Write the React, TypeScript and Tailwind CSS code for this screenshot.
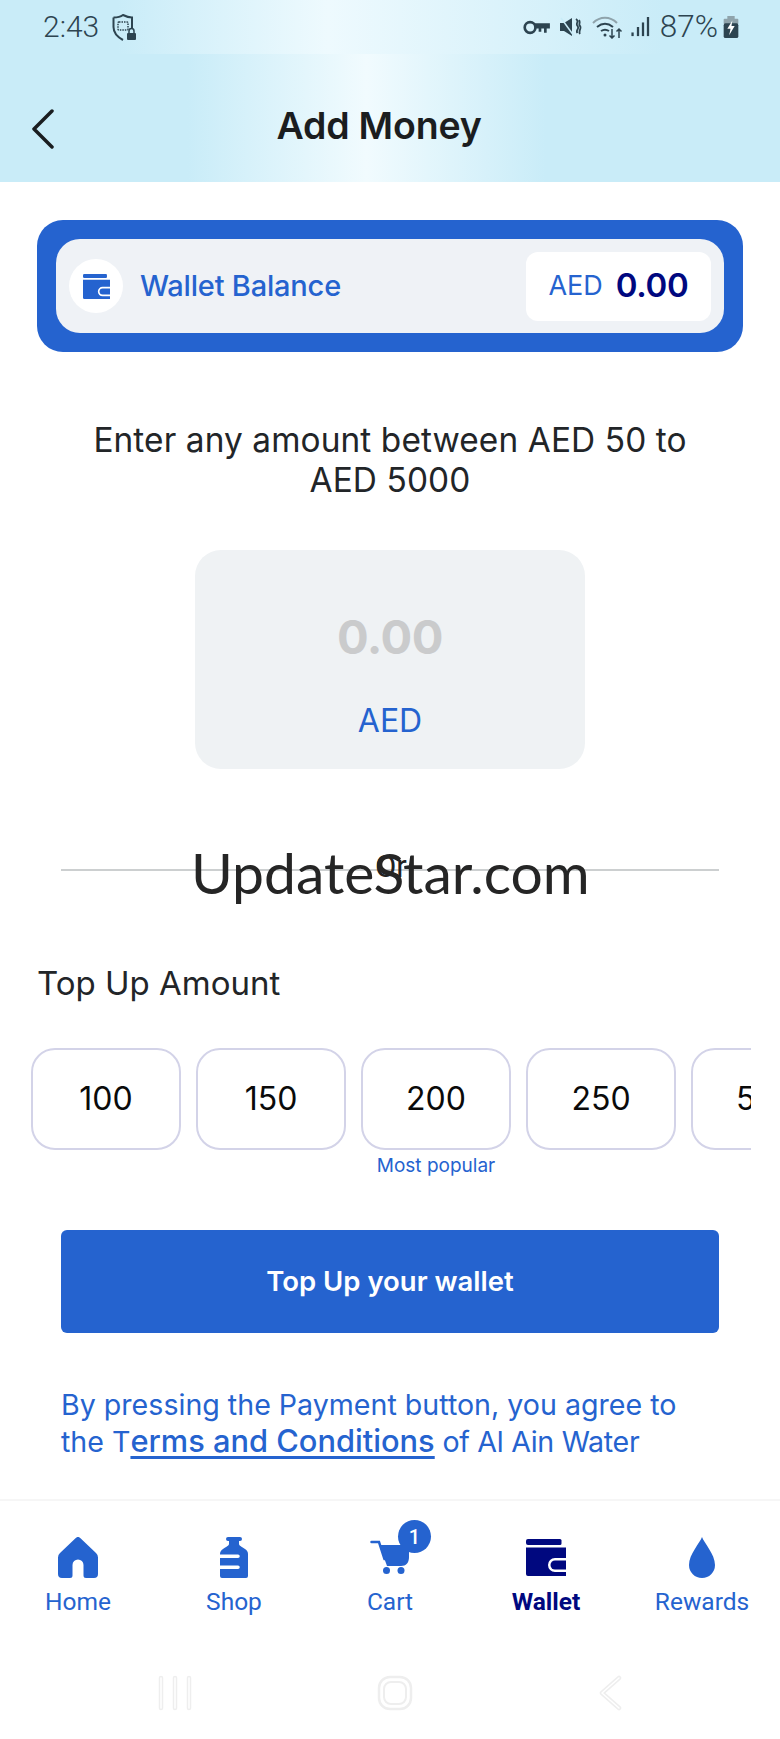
const blue = '#2563cf'
const navy = '#00087f'

function WalletIcon({ color, className }: { color: string; className: string }) {
  return (
    <svg viewBox="0 0 40 37" className={className}>
      <path d="M2 0h32a1.5 1.5 0 0 1 1.500 1.500v3a1.500 1.500 0 0 1-1.500 1.500H2a2 2 0 0 1-2-2V2a2 2 0 0 1 2-2z" fill={color} />
      <path d="M0 8.500h40V19H29a7 7 0 0 0 0 14h11v4H2a2 2 0 0 1-2-2z" fill={color} />
      <path d="M40 21.500H29a4.500 4.500 0 0 0 0 9h11z" fill={color} />
    </svg>
  )
}

function HomeIcon() {
  return (
    <svg viewBox="0 0 40 41" className="h-[41px] w-[40px]">
      <path
        fill={blue}
        d="M17.500 1.200a3.500 3.500 0 0 1 5 0L38 16a6 6 0 0 1 2 4.500V37a4 4 0 0 1-4 4h-8a2.500 2.500 0 0 1-2.500-2.500V28a5.500 5.500 0 0 0-11 0v10.500A2.500 2.500 0 0 1 12 41H4a4 4 0 0 1-4-4V20.500A6 6 0 0 1 2 16z"
      />
    </svg>
  )
}

function BottleIcon() {
  return (
    <svg viewBox="0 0 28 41" className="h-[41px] w-[28px]">
      <path
        fill={blue}
        d="M8 0h12a2 2 0 0 1 0 4h-1v3c0 1.500 3 3 6 5 2 1 3 3 3 5v22a2 2 0 0 1-2 2H2a2 2 0 0 1-2-2v-7h18a1.750 1.750 0 0 0 0-3.500H0V21h18a1.750 1.750 0 0 0 0-3.500H0V17c0-2 1-4 3-5 3-2 6-3.500 6-5V4H8a2 2 0 0 1 0-4z"
      />
    </svg>
  )
}

function CartIcon() {
  return (
    <svg viewBox="0 0 40 34" className="mb-[4px] h-[34px] w-[40px]">
      <path fill="none" stroke={blue} strokeWidth="2.500" strokeLinecap="round" d="M1.500 2h7.500l5.500 17" />
      <path fill={blue} d="M9.500 5H39v12c0 6-3 9-8 9H17z" />
      <circle cx="16.500" cy="30.500" r="3.500" fill={blue} />
      <circle cx="31" cy="30.500" r="3.500" fill={blue} />
    </svg>
  )
}

function DropIcon() {
  return (
    <svg viewBox="0 0 26 41" className="h-[41px] w-[26px]">
      <path fill={blue} d="M13 0c2 6 13 17 13 28a13 13 0 0 1-26 0C0 17 11 6 13 0z" />
    </svg>
  )
}

function StatusLeft() {
  return (
    <div className="flex items-center gap-[13px]">
      <span className="font-['Roboto',sans-serif] text-[30px] leading-none font-light text-[#2d4450]">2:43</span>
      <svg viewBox="0 0 26 27" className="h-[27px] w-[26px]">
        <path
          fill="none"
          stroke="#2d4450"
          strokeWidth="2"
          d="M1.500 3.500C6 3.500 9 2.500 11 1c3 1.500 6 2.500 9 2.500V15M1.500 3.500V13c0 6 4 10 9.500 13"
        />
        <rect x="6" y="8" width="10" height="8" rx="1" fill="none" stroke="#2d4450" strokeWidth="1.500" strokeDasharray="1.500 1" />
        <path fill="none" stroke="#2d4450" strokeWidth="1.500" d="M17 19v-2a2.500 2.500 0 0 1 5 0v2" />
        <rect x="15" y="19" width="9" height="7" rx="1" fill="#2d4450" />
      </svg>
    </div>
  )
}

function StatusRight() {
  return (
    <div className="flex items-center text-[#2d4450]">
      <svg viewBox="0 0 25 14" className="h-[15px] w-[27px]">
        <circle cx="6.500" cy="7" r="5" fill="none" stroke="#2d4450" strokeWidth="2.500" />
        <path fill="#2d4450" d="M11 3h14v5h-3v4h-2.500V8H17v3h-2.500V8H11z" />
      </svg>
      <svg viewBox="0 0 22 20" className="ml-[10px] h-[20px] w-[22px]">
        <path fill="#2d4450" d="M0 6h4l8-5v18l-8-5H0z" />
        <path stroke="#c9ecf8" strokeWidth="1.500" d="M1 1l13 18" />
        <path fill="none" stroke="#2d4450" strokeWidth="1.800" d="M16 2c4 3-1 4 1.500 7s-2.500 4 0 7M19 3c2 3-1 4 1 6s-2 5 0 8" />
      </svg>
      <svg viewBox="0 0 32 24" className="ml-[10px] h-[24px] w-[32px]">
        <path fill="none" stroke="#8fa3ab" strokeWidth="2" d="M1 8c7-7 17-7 24 0" />
        <path fill="none" stroke="#2d4450" strokeWidth="2" d="M5 12c5-4 11-4 16 0M9 16c3-2 5-2 8 0" />
        <circle cx="13" cy="20" r="1.500" fill="#2d4450" />
        <path fill="none" stroke="#2d4450" strokeWidth="1.500" d="M20 14v9m-2.500-2.500L20 23l2.500-2.500M27 23v-9m-2.500 2.500L27 14l2.500 2.500" />
      </svg>
      <svg viewBox="0 0 20 22" className="ml-[7px] h-[20px] w-[19px]">
        <rect x="0" y="17" width="2.500" height="4" fill="#2d4450" />
        <rect x="6" y="11" width="2.500" height="10" fill="#2d4450" />
        <rect x="11.500" y="6" width="2.500" height="15" fill="#2d4450" />
        <rect x="17" y="0" width="2.500" height="21" fill="#2d4450" />
      </svg>
      <span className="ml-[10px] font-['Roboto',sans-serif] text-[31.5px] leading-none font-light">87%</span>
      <svg viewBox="0 0 16 24" className="ml-[5px] h-[22px] w-[16px]">
        <rect x="4" y="0" width="8" height="4" fill="#8fa3ab" />
        <rect x="0" y="3" width="16" height="6" rx="1" fill="#8fa3ab" />
        <rect x="0" y="8" width="16" height="16" rx="2" fill="#2d4450" />
        <path fill="#fff" d="M9.500 5L4 14h3.500L6 21l6-10H8.500z" />
      </svg>
    </div>
  )
}

const amounts = ['100', '150', '200', '250', '500']

const navItems = [
  { label: 'Home', icon: <HomeIcon /> },
  { label: 'Shop', icon: <BottleIcon /> },
  { label: 'Cart', icon: <CartIcon />, badge: '1' },
  { label: 'Wallet', icon: <WalletIcon color={navy} className="mb-[2px] h-[37px] w-[40px]" />, active: true },
  { label: 'Rewards', icon: <DropIcon /> },
]

export default function App() {
  return (
    <div className="flex h-[1739px] w-[780px] flex-col overflow-hidden bg-white font-['Inter',sans-serif]">
      <header className="h-[182px] shrink-0 bg-[linear-gradient(90deg,#c9ecf8_24%,#f1fbfe_47%,#c9ecf8_70%)]">
        <div className="flex h-[54px] items-center justify-between bg-[linear-gradient(90deg,#c9ecf8_15%,#eefafe_42%,#c9ecf8_85%)] pr-[41px] pl-[43px]">
          <StatusLeft />
          <StatusRight />
        </div>
        <div className="relative flex h-[128px] items-center justify-center pr-[22px]">
          <svg viewBox="0 0 24 40" className="absolute top-[55px] left-[31px] h-[40px] w-[24px]">
            <path d="M21 2L3 20l18 18" fill="none" stroke="#1a1d20" strokeWidth="3.500" strokeLinecap="round" strokeLinejoin="round" />
          </svg>
          <h1 className="mt-[16px] text-[37.500px] leading-none font-semibold tracking-[-0.2px] text-[#1b1d1f]">Add Money</h1>
        </div>
      </header>

      <div className="mx-[37px] mt-[38px] h-[132px] shrink-0 rounded-[26px] bg-[#2563cf] p-[19px]">
        <div className="flex h-[94px] items-center rounded-[24px] bg-[#eff2f6] pr-[13px] pl-[13px]">
          <div className="flex h-[54px] w-[54px] items-center justify-center rounded-full bg-white">
            <WalletIcon color={blue} className="h-[25px] w-[27px]" />
          </div>
          <span className="ml-[17px] text-[29px] font-medium tracking-[-0.2px] text-[#2563cf]">Wallet Balance</span>
          <div className="ml-auto flex h-[69px] w-[185px] items-center justify-center gap-[13px] rounded-[12px] bg-white">
            <span className="text-[27px] text-[#2563cf]">AED</span>
            <span className="text-[33px] font-semibold tracking-[-0.3px] text-[#00087f]">0.00</span>
          </div>
        </div>
      </div>

      <p className="mt-[68px] text-center text-[33.400px] leading-[40px] tracking-[0.1px] text-[#222528]">
        Enter any amount between AED 50 to
        <br />
        AED 5000
      </p>

      <div className="mx-auto mt-[50px] flex h-[219px] w-[390px] shrink-0 flex-col items-center rounded-[26px] bg-[#eff2f4]">
        <span className="mt-[57px] text-[47px] leading-[60px] font-bold tracking-[-0.5px] text-[#cacbcc]">0.00</span>
        <span className="mt-[34px] text-[32px] leading-[40px] text-[#2563cf]">AED</span>
      </div>

      <div className="relative mx-[61px] mt-[100px] h-[2px] shrink-0 bg-[#cccfd0]">
        <span className="absolute top-[-20px] left-[314px] font-['Roboto',sans-serif] text-[31px] leading-[36px] text-[#222]">Or</span>
        <span className="absolute top-[-37px] left-[130px] font-['Lato',sans-serif] text-[57px] leading-[80px] whitespace-nowrap text-[#252525]">
          UpdateStar.com
        </span>
      </div>

      <h2 className="mt-[92px] ml-[37px] text-[33px] leading-[40px] text-[#222528]">Top Up Amount</h2>

      <div className="mt-[45px] ml-[31px] flex w-[720px] shrink-0 gap-[15px] overflow-hidden">
        {amounts.map((amount) => (
          <div key={amount} className="flex w-[150px] shrink-0 flex-col items-center">
            <div className="flex h-[102px] w-full items-center justify-center rounded-[24px] border-2 border-[#d3d3e8] text-[32px] text-[#0a0a0a]">
              {amount}
            </div>
            <span className="mt-[4px] h-[24px] text-[19px] leading-[24px] whitespace-nowrap text-[#2563cf]">
              {amount === '200' ? 'Most popular' : ''}
            </span>
          </div>
        ))}
      </div>

      <button className="mx-[61px] mt-[52px] h-[103px] shrink-0 rounded-[6px] bg-[#2563cf] text-[27.5px] font-semibold text-white">
        Top Up your wallet
      </button>

      <p className="mt-[54px] ml-[61px] text-[28.6px] leading-[36px] text-[#2563cf]">
        By pressing the Payment button, you agree to
        <br />
        the T
        <span className="text-[30.8px] font-medium underline underline-offset-4">erms and Conditions</span>
        <span className="tracking-[-0.3px]"> of Al Ain Water</span>
      </p>

      <nav className="mt-[39px] flex h-[130px] shrink-0 border-t-2 border-[#f6f6f6] pt-[33px]">
        {navItems.map((item) => (
          <div key={item.label} className="flex w-[156px] flex-col items-center">
            <div className="relative flex h-[44px] items-end">
              {item.icon}
              {item.badge && (
                <span className="absolute top-[-14px] left-[28px] flex h-[33px] w-[33px] items-center justify-center rounded-full bg-[#2563cf] font-['Roboto',sans-serif] text-[20px] font-medium text-white">
                  {item.badge}
                </span>
              )}
            </div>
            <span
              className={`mt-[9px] font-['Roboto',sans-serif] text-[24.5px] leading-[30px] ${item.active ? 'font-bold text-[#00087f]' : 'text-[#2563cf]'}`}
            >
              {item.label}
            </span>
          </div>
        ))}
      </nav>

      <div className="mt-[46px] flex h-[36px] shrink-0 items-center justify-center gap-[185px]">
        <svg viewBox="0 0 34 36" className="h-[36px] w-[34px]">
          <path d="M3 3v30M17 3v30M31 3v30" fill="none" stroke="#eeeeee" strokeWidth="4.500" strokeLinecap="round" />
          <path d="M3 3v30M17 3v30M31 3v30" fill="none" stroke="#ffffff" strokeWidth="1.500" strokeLinecap="round" />
        </svg>
        <svg viewBox="0 0 36 36" className="h-[36px] w-[36px]">
          <rect x="2" y="2" width="32" height="32" rx="11" fill="none" stroke="#eeeeee" strokeWidth="2.500" />
          <rect x="7" y="7" width="22" height="22" rx="7" fill="none" stroke="#eeeeee" strokeWidth="2" />
        </svg>
        <svg viewBox="0 0 24 36" className="h-[36px] w-[24px]">
          <path d="M21 3L4 18l17 15" fill="none" stroke="#eeeeee" strokeWidth="4.500" strokeLinecap="round" strokeLinejoin="round" />
          <path d="M21 3L4 18l17 15" fill="none" stroke="#ffffff" strokeWidth="1.500" strokeLinecap="round" strokeLinejoin="round" />
        </svg>
      </div>
    </div>
  )
}
